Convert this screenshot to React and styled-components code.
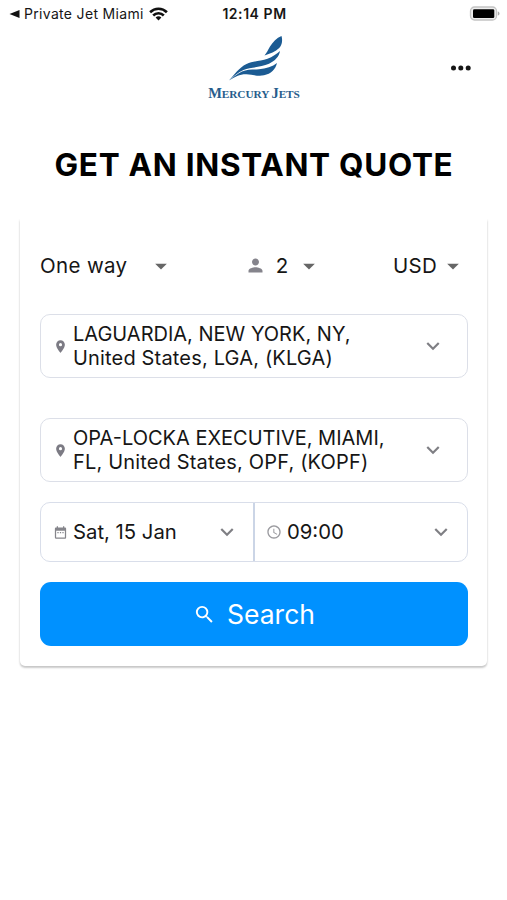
import React from "react";
import styled, { createGlobalStyle } from "styled-components";
import {
  MdAccessTime,
  MdArrowDropDown,
  MdDateRange,
  MdExpandMore,
  MdPerson,
  MdPlace,
  MdSearch,
} from "react-icons/md";

const GlobalStyle = createGlobalStyle`
  * {
    box-sizing: border-box;
  }

  body {
    margin: 0;
    background-color: white;
    color: #161616;
    font-family: Inter, "Liberation Sans", sans-serif;
  }

  button {
    font: inherit;
    color: inherit;
    background: none;
    border: none;
    padding: 0;
    cursor: pointer;
  }

  svg {
    display: block;
    flex-shrink: 0;
  }
`;

const Screen = styled.div`
  width: 507px;
  height: 900px;
  overflow: hidden;
  background-color: white;
`;

const StatusBar = styled.div`
  height: 27px;
  padding: 0 7px 0 9px;
  display: grid;
  grid-template-columns: 1fr auto 1fr;
  align-items: center;
`;

const BackToApp = styled.div`
  display: flex;
  align-items: center;
  font-size: 14px;
  letter-spacing: 0.32px;
  white-space: nowrap;

  span {
    margin: 0 5px 0 4px;
  }
`;

const Clock = styled.div`
  font-size: 14px;
  font-weight: 600;
  letter-spacing: 0.55px;
`;

const BatteryIcon = styled.svg`
  justify-self: end;
`;

const Header = styled.header`
  height: 80px;
  padding: 0 35px;
  display: grid;
  grid-template-columns: 1fr auto 1fr;
  align-items: start;
`;

const Brand = styled.div`
  grid-column: 2;
  padding-top: 9px;
  display: flex;
  flex-direction: column;
  align-items: center;
`;

const Wing = styled.svg`
  margin-left: 6px;
  overflow: visible;
`;

const BrandName = styled.div`
  margin-top: 3px;
  padding-left: 1px;
  color: #275d8c;
  font-family: "Liberation Serif", serif;
  font-size: 11.3px;
  font-weight: 700;
  line-height: 16px;
  letter-spacing: -0.1px;
  white-space: nowrap;

  big {
    font-size: 14.5px;
  }
`;

const MenuButton = styled.button`
  justify-self: end;
  margin-top: 37px;
`;

const Title = styled.h1`
  margin: 38px 0 0;
  padding-left: 1px;
  color: black;
  font-size: 31.5px;
  font-weight: 700;
  line-height: 40px;
  letter-spacing: 0.7px;
  text-align: center;
  white-space: nowrap;
`;

const Card = styled.main`
  width: 467px;
  height: 447px;
  margin: 34px auto 0 20px;
  padding: 24px 20px 20px;
  border-radius: 0 0 5px 5px;
  box-shadow: 0 2px 2px rgba(0, 0, 0, 0.2), 0 0 3px rgba(0, 0, 0, 0.08);
  clip-path: inset(0 -5px -6px);
`;

const Options = styled.div`
  height: 45px;
  display: flex;
  align-items: center;
  justify-content: space-between;
`;

const Option = styled.button`
  display: flex;
  align-items: center;
  gap: ${(props) => props.$gap || 4}px;
  font-size: 20.5px;
  letter-spacing: ${(props) => props.$spacing || 0}px;
`;

const Caret = styled(MdArrowDropDown)`
  width: 28px;
  height: 28px;
  color: #666;
`;

const PersonIcon = styled(MdPerson)`
  width: 21px;
  height: 21px;
  margin-right: 3px;
  color: #85848c;
`;

const Field = styled.button`
  width: 428px;
  height: 64px;
  margin-top: ${(props) => props.$top}px;
  padding: 0 21px 0 12px;
  display: flex;
  align-items: center;
  border: 1.5px solid #dcdfe8;
  border-radius: 10px;
  font-size: 20px;
  line-height: 24.4px;
  text-align: left;
  white-space: pre;
`;

const FieldText = styled.span`
  flex: 1;
  margin-left: 5px;
`;

const Line = styled.span`
  display: block;
  letter-spacing: ${(props) => props.$spacing || 0}px;
`;

const PinIcon = styled(MdPlace)`
  width: 15px;
  height: 15px;
  color: #7c7b84;
`;

const Chevron = styled(MdExpandMore)`
  width: 26px;
  height: 26px;
  color: #7f7f84;
`;

const DateTimeRow = styled.div`
  display: grid;
  grid-template-columns: 212px 1fr;
  width: 428px;
  height: 60px;
  margin-top: 20px;
  border: 1.5px solid #d9deea;
  border-radius: 10px;
`;

const DateTimeCell = styled.button`
  display: flex;
  align-items: center;
  padding: 0 13px 0 12px;
  font-size: 20.3px;
  line-height: 24px;
  text-align: left;
  white-space: nowrap;

  & + & {
    padding-left: 11px;
    border-left: 2px solid #cbd5e6;
  }
`;

const CalendarIcon = styled(MdDateRange)`
  width: 15px;
  height: 15px;
  color: #85858b;
`;

const TimeIcon = styled(MdAccessTime)`
  width: 16px;
  height: 16px;
  color: #9a9a9f;
`;

const SearchButton = styled.button`
  width: 428px;
  height: 64px;
  margin-top: 20px;
  display: flex;
  align-items: center;
  justify-content: center;
  gap: 11px;
  border-radius: 11px;
  background-color: #0091ff;
  color: white;
  font-size: 26.5px;
`;

const BackArrow = () => (
  <svg width="11" height="10" viewBox="0 0 11 10">
    <path d="M10.5 1v8L.5 5z" fill="#111" />
  </svg>
);

const WifiIcon = () => (
  <svg width="19" height="14" viewBox="0 0 19 14">
    <g fill="none" stroke="#111" strokeWidth="2.6">
      <path d="M1.1 5.2a12 12 0 0 1 16.8 0" />
      <path d="M4.2 8.5a7.5 7.5 0 0 1 10.6 0" />
    </g>
    <path d="M6.6 10.6a4.2 4.2 0 0 1 5.8 0L9.5 13.6z" fill="#111" />
  </svg>
);

const Battery = () => (
  <BatteryIcon width="31" height="16" viewBox="0 0 31 16">
    <rect x="1.5" y="1" width="26" height="13" rx="4" fill="#eee" stroke="#c4c4c4" strokeWidth="1.3" />
    <rect x="4" y="3.3" width="21.3" height="8.8" rx="1.3" fill="black" />
    <path d="M28.8 5.4c2.3.6 2.3 3.6 0 4.2z" fill="#aaa" />
  </BatteryIcon>
);

// Three stacked wing feathers above the brand name
const WingLogo = () => (
  <Wing width="54" height="46" viewBox="0 0 54 46">
    <g fill="#1b5b93">
      <path d="M52.5 0C47.5 2 44 6 41 10.5C39 14 37.5 17 35.5 19.5C41 17.8 46.5 15.5 50.2 12C53.4 8.8 53.6 4 52.5 0Z" />
      <path d="M51 15C47.5 18 43.5 21 38.5 22.8C31.5 25.2 24 25 17.5 28C9.5 32 5.5 38.5 0 44.5C5 40 9 36.5 14.5 34C22 31 32 31.5 40 27.8C46 24.8 50.2 20.5 51 15Z" />
      <path d="M48 27C43.5 30.5 37 32.8 30 33.3C24 33.7 18 33.2 13 35.4C8 37.8 4 41 0 44.5C6 40.7 11 38 17.5 38.2C23.5 38.5 29 40.6 35 39.3C42 37.8 46.5 33.5 48 27Z" />
    </g>
  </Wing>
);

const Dots = () => (
  <svg width="22" height="8" viewBox="0 0 22 8">
    <g fill="#161616">
      <circle cx="3.5" cy="4" r="2.5" />
      <circle cx="10.8" cy="4" r="2.5" />
      <circle cx="18.2" cy="4" r="2.5" />
    </g>
  </svg>
);

const App = () => {
  return (
    <Screen>
      <GlobalStyle />
      <StatusBar>
        <BackToApp>
          <BackArrow />
          <span>Private Jet Miami</span>
          <WifiIcon />
        </BackToApp>
        <Clock>12:14 PM</Clock>
        <Battery />
      </StatusBar>

      <Header>
        <Brand>
          <WingLogo />
          <BrandName>
            <big>M</big>ERCURY <big>J</big>ETS
          </BrandName>
        </Brand>
        <MenuButton aria-label="Menu">
          <Dots />
        </MenuButton>
      </Header>

      <Title>GET AN INSTANT QUOTE</Title>

      <Card>
        <Options>
          <Option $gap={19.5} $spacing={0.35}>
            One way <Caret />
          </Option>
          <Option $gap={7}>
            <PersonIcon /> <span>2</span> <Caret />
          </Option>
          <Option $gap={2} $spacing={0.3}>
            USD <Caret />
          </Option>
        </Options>

        <Field $top={26}>
          <PinIcon />
          <FieldText>
            <Line>LAGUARDIA, NEW YORK, NY,</Line>
            <Line $spacing={0.17}>United States, LGA, (KLGA)</Line>
          </FieldText>
          <Chevron />
        </Field>

        <Field $top={40}>
          <PinIcon />
          <FieldText>
            <Line>OPA-LOCKA EXECUTIVE, MIAMI,</Line>
            <Line $spacing={0.17}>FL, United States, OPF, (KOPF)</Line>
          </FieldText>
          <Chevron />
        </Field>

        <DateTimeRow>
          <DateTimeCell>
            <CalendarIcon />
            <FieldText>Sat, 15 Jan</FieldText>
            <Chevron />
          </DateTimeCell>
          <DateTimeCell>
            <TimeIcon />
            <FieldText>09:00</FieldText>
            <Chevron />
          </DateTimeCell>
        </DateTimeRow>

        <SearchButton>
          <MdSearch size={23} />
          Search
        </SearchButton>
      </Card>
    </Screen>
  );
};

export default App;
